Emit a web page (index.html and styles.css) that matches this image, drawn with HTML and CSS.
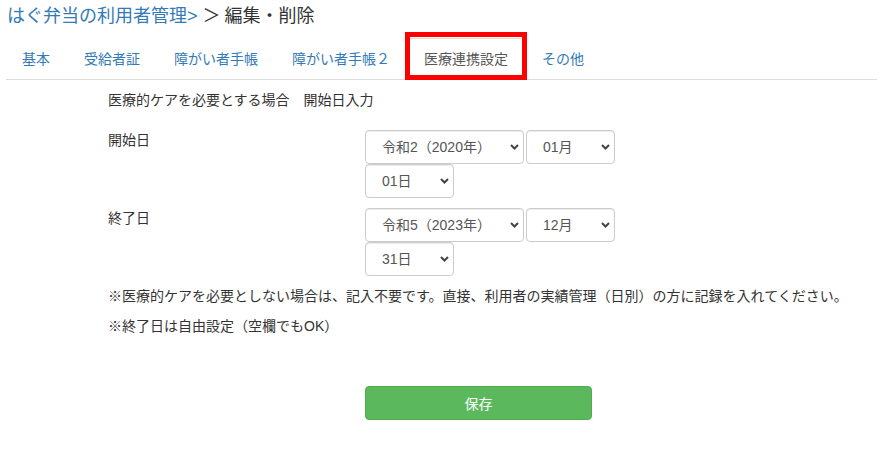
FILE: index.html
```html
<!DOCTYPE html>
<html lang="ja">
<head>
<meta charset="utf-8">
<title>編集・削除</title>
<link rel="stylesheet" href="styles.css">
</head>
<body>
<h1 class="title"><a class="title-link" href="#">はぐ弁当の利用者管理&gt;</a><span class="gt">＞</span>編集・削除</h1>
<ul class="tabs">
  <li><a href="#">基本</a></li>
  <li><a href="#">受給者証</a></li>
  <li><a href="#">障がい者手帳</a></li>
  <li><a href="#">障がい者手帳２</a></li>
  <li class="active"><a href="#">医療連携設定</a><span class="mark"></span></li>
  <li><a href="#">その他</a></li>
</ul>
<form class="form">
  <p class="lead">医療的ケアを必要とする場合　開始日入力</p>
  <div class="group">
    <label class="label">開始日</label>
    <div class="dates">
      <span class="sel year"><select><option>令和2（2020年）</option></select><svg class="chev" width="9" height="6" viewBox="0 0 9 6"><polyline points="1,1 4.5,4.5 8,1" fill="none" stroke="#444" stroke-width="2"/></svg></span>
      <span class="sel small"><select><option>01月</option></select><svg class="chev" width="9" height="6" viewBox="0 0 9 6"><polyline points="1,1 4.5,4.5 8,1" fill="none" stroke="#444" stroke-width="2"/></svg></span>
      <span class="sel small"><select><option>01日</option></select><svg class="chev" width="9" height="6" viewBox="0 0 9 6"><polyline points="1,1 4.5,4.5 8,1" fill="none" stroke="#444" stroke-width="2"/></svg></span>
    </div>
  </div>
  <div class="group">
    <label class="label">終了日</label>
    <div class="dates">
      <span class="sel year"><select><option>令和5（2023年）</option></select><svg class="chev" width="9" height="6" viewBox="0 0 9 6"><polyline points="1,1 4.5,4.5 8,1" fill="none" stroke="#444" stroke-width="2"/></svg></span>
      <span class="sel small"><select><option>12月</option></select><svg class="chev" width="9" height="6" viewBox="0 0 9 6"><polyline points="1,1 4.5,4.5 8,1" fill="none" stroke="#444" stroke-width="2"/></svg></span>
      <span class="sel small"><select><option>31日</option></select><svg class="chev" width="9" height="6" viewBox="0 0 9 6"><polyline points="1,1 4.5,4.5 8,1" fill="none" stroke="#444" stroke-width="2"/></svg></span>
    </div>
  </div>
  <p class="note">※医療的ケアを必要としない場合は、記入不要です。直接、利用者の実績管理（日別）の方に記録を入れてください。</p>
  <p class="note">※終了日は自由設定（空欄でもOK）</p>
  <div class="actions">
    <button type="button" class="btn">保存</button>
  </div>
</form>
</body>
</html>
```
FILE: styles.css
```css
* { box-sizing: border-box; }
html, body { margin: 0; padding: 0; background: #fff; }
body {
  font-family: "Liberation Sans", "Noto Sans CJK JP", sans-serif;
  font-size: 14px;
  line-height: 20px;
  color: #333;
}
.title {
  margin: 0;
  padding: 6px 0 0 7px;
  font-size: 18px;
  line-height: 21px;
  font-weight: normal;
  color: #333;
}
.title-link { color: #337ab7; text-decoration: none; }
.gt { margin: 0 4px 0 5px; }

.tabs {
  display: flex;
  list-style: none;
  margin: 11px 6px 0 6px;
  padding: 0;
  border-bottom: 1px solid #ddd;
}
.tabs li {
  position: relative;
  margin: 0 2px -1px 0;
}
.tabs a {
  display: block;
  padding: 10px 15px;
  line-height: 20px;
  border: 1px solid transparent;
  border-radius: 4px 4px 0 0;
  color: #337ab7;
  text-decoration: none;
}
.tabs .active a {
  color: #555;
  background: #fff;
  border-color: #ddd #ddd transparent;
}
.mark {
  position: absolute;
  left: -3px;
  right: -3px;
  top: -6px;
  bottom: 0;
  border: 5px solid #f00;
  pointer-events: none;
}

.form { padding-left: 108px; margin: 0; }
.lead { margin: 10px 0 20px; }
.group {
  display: grid;
  grid-template-columns: 257px auto;
  margin-bottom: 10px;
}
.label { line-height: 20px; }
.dates {
  display: flex;
  flex-wrap: wrap;
  column-gap: 2px;
  width: 252px;
}
.sel { position: relative; display: block; height: 34px; }
.sel.year { width: 159px; }
.sel.small { width: 89px; }
.sel select {
  -webkit-appearance: none;
  appearance: none;
  width: 100%;
  height: 34px;
  padding: 0 20px 0 16px;
  font-family: "Liberation Sans", "Noto Sans CJK JP", sans-serif;
  font-size: 14px;
  color: #555;
  background: #fff;
  border: 1px solid #ccc;
  border-radius: 4px;
  box-shadow: inset 0 1px 1px rgba(0,0,0,.075);
}
.chev {
  position: absolute;
  right: 5px;
  top: 14px;
  pointer-events: none;
}
.note { margin: 0 0 10px; }
.actions { padding-left: 257px; margin-top: 50px; }
.btn {
  display: block;
  width: 227px;
  height: 34px;
  font-family: "Liberation Sans", "Noto Sans CJK JP", sans-serif;
  font-size: 14px;
  color: #fff;
  background: #5cb85c;
  border: 1px solid #4cae4c;
  border-radius: 4px;
}
```
